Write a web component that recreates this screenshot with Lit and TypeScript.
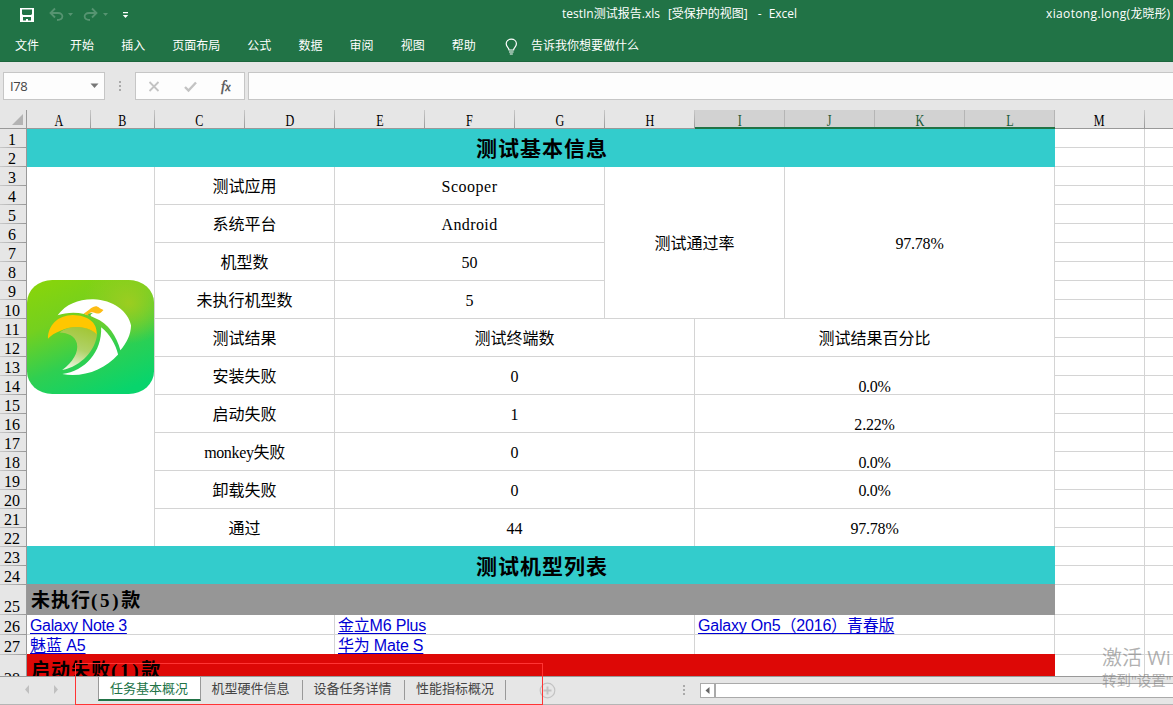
import { LitElement, html, css } from "lit";
import { customElement, property } from "lit/decorators.js";
import { classMap } from "lit/directives/class-map.js";
import { styleMap } from "lit/directives/style-map.js";

const MENU = ["文件", "开始", "插入", "页面布局", "公式", "数据", "审阅", "视图", "帮助"];
const COLS = "ABCDEFGHIJKLM".split("");
const TABS = ["任务基本概况", "机型硬件信息", "设备任务详情", "性能指标概况"];

interface Cell {
  r: number;
  c: number;
  rs: number;
  cs: number;
  text?: string;
  kind?: string;
  gap?: number;
}

// Row and column are 1-based sheet positions; rs/cs are merged spans.
const CELLS: Cell[] = [
  { r: 1, c: 1, rs: 2, cs: 12, text: "测试基本信息", kind: "band first" },
  { r: 3, c: 1, rs: 20, cs: 2, kind: "logo" },
  { r: 3, c: 3, rs: 2, cs: 2, text: "测试应用" },
  { r: 5, c: 3, rs: 2, cs: 2, text: "系统平台" },
  { r: 7, c: 3, rs: 2, cs: 2, text: "机型数" },
  { r: 9, c: 3, rs: 2, cs: 2, text: "未执行机型数" },
  { r: 11, c: 3, rs: 2, cs: 2, text: "测试结果" },
  { r: 13, c: 3, rs: 2, cs: 2, text: "安装失败" },
  { r: 15, c: 3, rs: 2, cs: 2, text: "启动失败" },
  { r: 17, c: 3, rs: 2, cs: 2, text: "monkey失败", gap: -0.35 },
  { r: 19, c: 3, rs: 2, cs: 2, text: "卸载失败" },
  { r: 21, c: 3, rs: 2, cs: 2, text: "通过" },
  { r: 3, c: 5, rs: 2, cs: 3, text: "Scooper", gap: 0.5 },
  { r: 5, c: 5, rs: 2, cs: 3, text: "Android", gap: 0.4 },
  { r: 7, c: 5, rs: 2, cs: 3, text: "50" },
  { r: 9, c: 5, rs: 2, cs: 3, text: "5" },
  { r: 3, c: 8, rs: 8, cs: 2, text: "测试通过率" },
  { r: 3, c: 10, rs: 8, cs: 3, text: "97.78%", gap: -0.2 },
  { r: 11, c: 5, rs: 2, cs: 4, text: "测试终端数" },
  { r: 13, c: 5, rs: 2, cs: 4, text: "0" },
  { r: 15, c: 5, rs: 2, cs: 4, text: "1" },
  { r: 17, c: 5, rs: 2, cs: 4, text: "0" },
  { r: 19, c: 5, rs: 2, cs: 4, text: "0" },
  { r: 21, c: 5, rs: 2, cs: 4, text: "44" },
  { r: 11, c: 9, rs: 2, cs: 4, text: "测试结果百分比" },
  { r: 13, c: 9, rs: 2, cs: 4, text: "0.0%", kind: "low", gap: -0.3 },
  { r: 15, c: 9, rs: 2, cs: 4, text: "2.22%", kind: "low", gap: -0.2 },
  { r: 17, c: 9, rs: 2, cs: 4, text: "0.0%", kind: "low", gap: -0.3 },
  { r: 19, c: 9, rs: 2, cs: 4, text: "0.0%", gap: -0.3 },
  { r: 21, c: 9, rs: 2, cs: 4, text: "97.78%", gap: -0.2 },
  { r: 23, c: 1, rs: 2, cs: 12, text: "测试机型列表", kind: "band" },
  { r: 25, c: 1, rs: 1, cs: 12, text: "未执行(5)款", kind: "group gray" },
  { r: 26, c: 1, rs: 1, cs: 4, text: "Galaxy Note 3", kind: "link", gap: -0.35 },
  { r: 26, c: 5, rs: 1, cs: 4, text: "金立M6 Plus", kind: "link", gap: -0.2 },
  { r: 26, c: 9, rs: 1, cs: 4, text: "Galaxy On5（2016）青春版", kind: "link", gap: -0.2 },
  { r: 27, c: 1, rs: 1, cs: 4, text: "魅蓝 A5", kind: "link", gap: -0.1 },
  { r: 27, c: 5, rs: 1, cs: 4, text: "华为 Mate S", kind: "link", gap: -0.2 },
  { r: 27, c: 9, rs: 1, cs: 4 },
  { r: 28, c: 1, rs: 1, cs: 12, text: "启动失败(1)款", kind: "group red" },
];
for (let r = 1; r <= 28; r++) for (const c of [13, 14]) CELLS.push({ r, c, rs: 1, cs: 1 });

@customElement("bird-logo")
class BirdLogo extends LitElement {
  static styles = css`
    :host { display: block; flex: none; width: 127px; height: 114px; }
    svg { display: block; }
  `;
  render() {
    return html`<svg width="127" height="114" viewBox="80 60 382 343" preserveAspectRatio="none">
      <defs>
        <linearGradient id="bg" x1="0.25" y1="0" x2="0.7" y2="1">
          <stop offset="0" stop-color="#86d40d" />
          <stop offset="0.3" stop-color="#74d01f" />
          <stop offset="0.65" stop-color="#2fcf51" />
          <stop offset="1" stop-color="#08d46c" />
        </linearGradient>
        <radialGradient id="glow" cx="0.8" cy="0.2" r="0.36">
          <stop offset="0" stop-color="#9ccd20" />
          <stop offset="1" stop-color="#9ccd20" stop-opacity="0" />
        </radialGradient>
        <linearGradient id="neck" x1="0.6" y1="0" x2="0.3" y2="1">
          <stop offset="0" stop-color="#a3c637" />
          <stop offset="0.5" stop-color="#b0d268" />
          <stop offset="1" stop-color="#f0f8e8" />
        </linearGradient>
      </defs>
      <rect x="80" y="60" width="382" height="343" rx="76" ry="68" fill="url(#bg)" />
      <rect x="80" y="60" width="382" height="343" rx="76" ry="68" fill="url(#glow)" />
      <path d="M172 166C198 132 236 117 280 118C338 120 385 154 393 197C392 224 380 250 361 271C349 228 325 190 284 174C248 155 205 155 172 166Z" fill="#fff" />
      <path d="M303 202C330 224 346 252 354 284C314 330 250 354 186 343C255 334 306 276 303 202Z" fill="#fff" />
      <path d="M178 218C210 192 262 198 291 222C287 270 244 320 186 331C218 306 236 278 230 250C224 229 204 219 178 218Z" fill="url(#neck)" />
      <path d="M143 237C143 196 172 166 218 165C262 166 291 186 290 223C263 198 214 194 181 213C164 220 152 227 143 237Z" fill="#ffc700" />
      <path d="M250 161C263 156 270 142 287 139C295 139 297 146 310 150C304 157 300 161 291 161C284 160 280 156 274 157C268 158 264 164 266 168C260 166 254 163 250 161Z" fill="#fdbc14" />
      <path d="M262 166C266 160 272 158 278 160C272 161 270 166 272 170Z" fill="#55c53a" />
    </svg>`;
  }
}

@customElement("sheet-cell")
class SheetCell extends LitElement {
  @property() text = "";
  @property() kind = "";
  @property({ type: Number }) gap = 0;
  static styles = css`
    :host { display: flex; min-width: 0; min-height: 0; position: relative; }
    .cell {
      flex: 1; min-width: 0; box-sizing: border-box; display: flex; align-items: center; justify-content: center;
      border-right: 1px solid #d4d4d4; border-bottom: 1px solid #d4d4d4; color: #000; background: #fff;
      font: 400 16px/18px "Liberation Serif", "Noto Sans CJK SC", serif; white-space: nowrap;
    }
    .text { padding-top: 2px; }
    .low { align-items: flex-end; }
    .low .text { padding: 0; margin-bottom: -2px; }
    .band, .group { border: 0; margin-top: -1px; font-weight: 700; font-size: 21px; letter-spacing: 1px; line-height: 26px; }
    .band { background: #33cccc; }
    .band .text { padding: 2px 0 0 2px; }
    .band.first { margin-top: 0; }
    .band.first .text { padding-top: 1px; }
    .group { justify-content: flex-start; padding-left: 4px; font-size: 19px; align-items: flex-start; }
    .group .text { padding-top: 4px; }
    .paren { letter-spacing: 2.7px; }
    .gray { background: #969696; }
    .red { background: #dd0806; }
    .link { justify-content: flex-start; padding-left: 3px; font: 16px/18px "Liberation Sans", "Noto Sans CJK SC", sans-serif; }
    .link .text { padding: 2px 0 0; color: #0000d4; text-decoration: underline; text-underline-offset: 2px; text-decoration-thickness: 1px; text-decoration-skip-ink: none; }
    .logo { justify-content: flex-start; padding-bottom: 39px; }
  `;
  render() {
    const classes: Record<string, boolean> = { cell: true };
    this.kind.split(" ").filter(Boolean).forEach((k) => (classes[k] = true));
    if (this.kind === "logo") return html`<div class=${classMap(classes)}><bird-logo></bird-logo></div>`;
    const parts = this.kind.startsWith("group")
      ? this.text.split(/(\(\d+\))/).map((p) => (p.startsWith("(") ? html`<span class="paren">${p}</span>` : p))
      : this.text;
    return html`<div class=${classMap(classes)}>
      <span class="text" style=${styleMap(this.gap ? { letterSpacing: `${this.gap}px` } : {})}>${parts}</span>
    </div>`;
  }
}

@customElement("app-root")
class AppRoot extends LitElement {
  static styles = css`
    :host { display: flex; flex-direction: column; position: relative; width: 1173px; height: 705px; overflow: hidden; background: #e6e6e6; font: 12px/16px "Open Sans", "Noto Sans CJK SC", sans-serif; }
    * { box-sizing: border-box; }
    svg { display: block; }
    .top { flex: none; height: 62px; background: #217346; border-bottom: 1px solid #1c663d; color: #fff; }
    .titlebar { display: grid; grid-template-columns: 562px 1fr auto; height: 28px; padding-top: 5px; white-space: nowrap; }
    .titlebar > span { padding-top: 1px; }
    .doc { display: flex; }
    .doc .state { margin: 0 8px 0 8px; }
    .doc .dash { margin: 0 7px 0 2px; }
    .titlebar .user { padding-right: 3px; }
    .latin { letter-spacing: 0.36px; }
    .quick { height: 23px; }
    .menu { display: flex; padding: 10px 0 0 15px; }
    .menu span { white-space: nowrap; margin-right: 27.1px; }
    .menu .file { margin-right: 31px; }
    .menu .bulb { margin: 0 13px 0 2px; }
    .formula { flex: none; height: 48px; padding: 10px 0 10px 3px; display: flex; }
    .box { border: 1px solid #c6c6c6; background: #fdfdfd; height: 28px; display: flex; align-items: center; }
    .name { width: 102px; padding: 0 5px 0 6px; justify-content: space-between; color: #444; font-size: 13px; letter-spacing: -0.4px; }
    .dots { width: 30px; height: 28px; }
    .tools { width: 110px; margin-right: 3px; }
    .input { flex: 1; border-right: 0; }
    .sheet { flex: none; height: 566px; display: grid; overflow: hidden; grid-template-columns: 27px 64px 64px repeat(12, 90px); grid-template-rows: 19px repeat(24, 19px) 30px 20px 20px 22px; }
    .head { font: 16px/19px "Liberation Serif", serif; display: flex; justify-content: center; color: #000; padding-right: 1px; border-bottom: 1px solid #999; background: linear-gradient(#c9c9c9, #999) right / 1px 100% no-repeat #e6e6e6; }
    .head span { transform: scaleX(0.76); padding-top: 1px; }
    .head.on { background: linear-gradient(#b5b5b5, #b5b5b5) right / 1px 100% no-repeat #d2d2d2; color: #1d5c39; border-bottom: 2px solid #217346; }
    .corner { border-bottom: 1px solid #999; border-right: 1px solid #999; padding: 4px 0 0 12px; }
    .row { font: 16px/16px "Liberation Serif", serif; border-right: 1px solid #999; display: flex; align-items: flex-end; justify-content: center; padding-right: 2px; background: linear-gradient(90deg, #c9c9c9, #999) bottom / 100% 1px no-repeat #e6e6e6; }
    .row.cut { height: 32px; }
    .bottom { flex: 1; border-top: 1px solid #999; border-bottom: 1px solid #b5b5b5; display: flex; color: #444; font-size: 13px; }
    .nav { width: 98px; flex: none; }
    .tab { width: 102px; height: 20px; margin-top: 3px; padding-right: 2px; text-align: center; border-right: 1px solid #999; line-height: 17px; white-space: nowrap; }
    .tab:nth-last-of-type(2) { width: 101px; padding-right: 0; }
    .tab.active { width: 103px; height: 24px; margin-top: 0; padding: 3px 1px 0 0; background: #fff; color: #217346; border: 1px solid #999; border-top: 0; border-bottom: 2px solid #217346; }
    .plus { margin: 5px 0 0 33px; }
    .grip { margin: 6px 0 0 126px; }
    .scroll { margin: 6px 0 0 14px; height: 15px; flex: 1; border: 1px solid #aaa; border-right: 0; background: #fff; display: flex; }
    .arrow { width: 15px; border-right: 2px solid #aaa; }
    .mark { position: absolute; left: 75px; top: 663px; width: 468px; height: 42px; border: 1px solid #ff3434; }
    .watermark { position: absolute; left: 1102px; top: 645px; white-space: nowrap; color: rgba(125, 125, 125, 0.6); font: 20px/26px "Open Sans", "Noto Sans CJK SC", sans-serif; }
    .watermark small { display: block; font-size: 14.5px; line-height: 20px; }
  `;

  private quick() {
    return html`<svg class="quick" width="140" height="23" viewBox="0 5 140 23" fill="none">
      <path d="M20 8H34V22H20Z" fill="#fff" />
      <path d="M22 9.5H32V14L31 15H23L22 14ZM23 17H31V20.5H28V19H26V20.5H23Z" fill="#217346" />
      <g stroke="#569471" stroke-width="1.8">
        <path d="M55 8.5L50.5 13L55 17.5M51 13H58C64 13 64 20 57 20" />
        <path d="M92 8.5L96.5 13L92 17.5M96 13H89C83 13 83 20 90 20" />
      </g>
      <path d="M68 13H73L70.5 16ZM103 13H108L105.5 16Z" fill="#569471" />
      <path d="M123 12H128V13.2H123ZM122.8 15H128.2L125.5 18Z" fill="#fff" />
    </svg>`;
  }

  render() {
    return html`
      <div class="top">
        <div class="titlebar">
          ${this.quick()}
          <span class="doc"><span>testIn测试报告.xls</span><span class="state">[受保护的视图]</span><span class="dash">-</span><span>Excel</span></span>
          <span class="user"><span class="latin">xiaotong.long(</span>龙晓彤)</span>
        </div>
        <div class="menu">
          ${MENU.map((m, i) => html`<span class=${i ? "" : "file"}>${m}</span>`)}
          <svg class="bulb" width="13" height="18" viewBox="0 0 13 18" fill="none" stroke="#fff" stroke-width="1.2">
            <path d="M4 12C4 9.5 1.2 9 1.2 5.8C1.2 3 3.5 1.2 6.3 1.2S11.4 3 11.4 5.8C11.4 9 8.6 9.5 8.6 12ZM4 14H8.6M4.8 16H7.8" />
          </svg>
          <span>告诉我你想要做什么</span>
        </div>
      </div>
      <div class="formula">
        <div class="box name">I78<svg width="9" height="6"><path d="M0.5 0.5H8.5L4.5 5Z" fill="#777" /></svg></div>
        <svg class="dots" width="30" height="28" fill="#aaa"><path d="M14 9h2v2h-2zM14 13h2v2h-2zM14 17h2v2h-2z" /></svg>
        <div class="box tools">
          <svg width="108" height="26" viewBox="0 0 108 26" fill="none">
            <path d="M13.5 9L22.5 18M22.5 9L13.5 18" stroke="#c3c3c3" stroke-width="1.8" />
            <path d="M49 14L52.5 17.5L60 9.5" stroke="#c3c3c3" stroke-width="2.4" />
            <text x="85" y="17.5" fill="#555" stroke="#555" stroke-width="0.4" font-family="Liberation Serif" font-style="italic" font-size="15">f<tspan font-size="12">x</tspan></text>
          </svg>
        </div>
        <div class="box input"></div>
      </div>
      <div class="sheet">
        <div class="corner"><svg width="11" height="11"><path d="M11 0V11H0Z" fill="#b3b3b3" /></svg></div>
        ${COLS.map((c, i) => html`<div class=${classMap({ head: true, on: i > 7 && i < 12 })}><span>${c}</span></div>`)}
        <div class="head"></div>
        ${Array.from({ length: 28 }, (_, i) => html`<div class=${classMap({ row: true, cut: i === 27 })} style=${styleMap({ gridArea: `${i + 2} / 1` })}>${i + 1}</div>`)}
        ${CELLS.map((d) => html`<sheet-cell .text=${d.text ?? ""} .kind=${d.kind ?? ""} .gap=${d.gap ?? 0}
          style=${styleMap({ gridArea: `${d.r + 1} / ${d.c + 1} / span ${d.rs} / span ${d.cs}` })}></sheet-cell>`)}
      </div>
      <div class="bottom">
        <svg class="nav" width="98" height="27" fill="#c0c0c0"><path d="M29 8V17L25 12.5ZM54 8V17L58 12.5Z" /></svg>
        ${TABS.map((t, i) => html`<div class=${classMap({ tab: true, active: i === 0 })}>${t}</div>`)}
        <svg class="plus" width="17" height="17" fill="none" stroke="#c3c3c3"><circle cx="8.5" cy="8.5" r="7.3" stroke-width="1.2" /><path d="M4.5 8.5H12.5M8.5 4.5V12.5" stroke-width="2" /></svg>
        <svg class="grip" width="4" height="14" fill="#aaa"><path d="M1 2h2v2H1zM1 6h2v2H1zM1 10h2v2H1z" /></svg>
        <div class="scroll"><svg class="arrow" width="15" height="13"><path d="M8.5 3V10L4.5 6.5Z" fill="#666" /></svg></div>
      </div>
      <div class="mark"></div>
      <div class="watermark">激活 Wi<small>转到"设置"</small></div>
    `;
  }
}
